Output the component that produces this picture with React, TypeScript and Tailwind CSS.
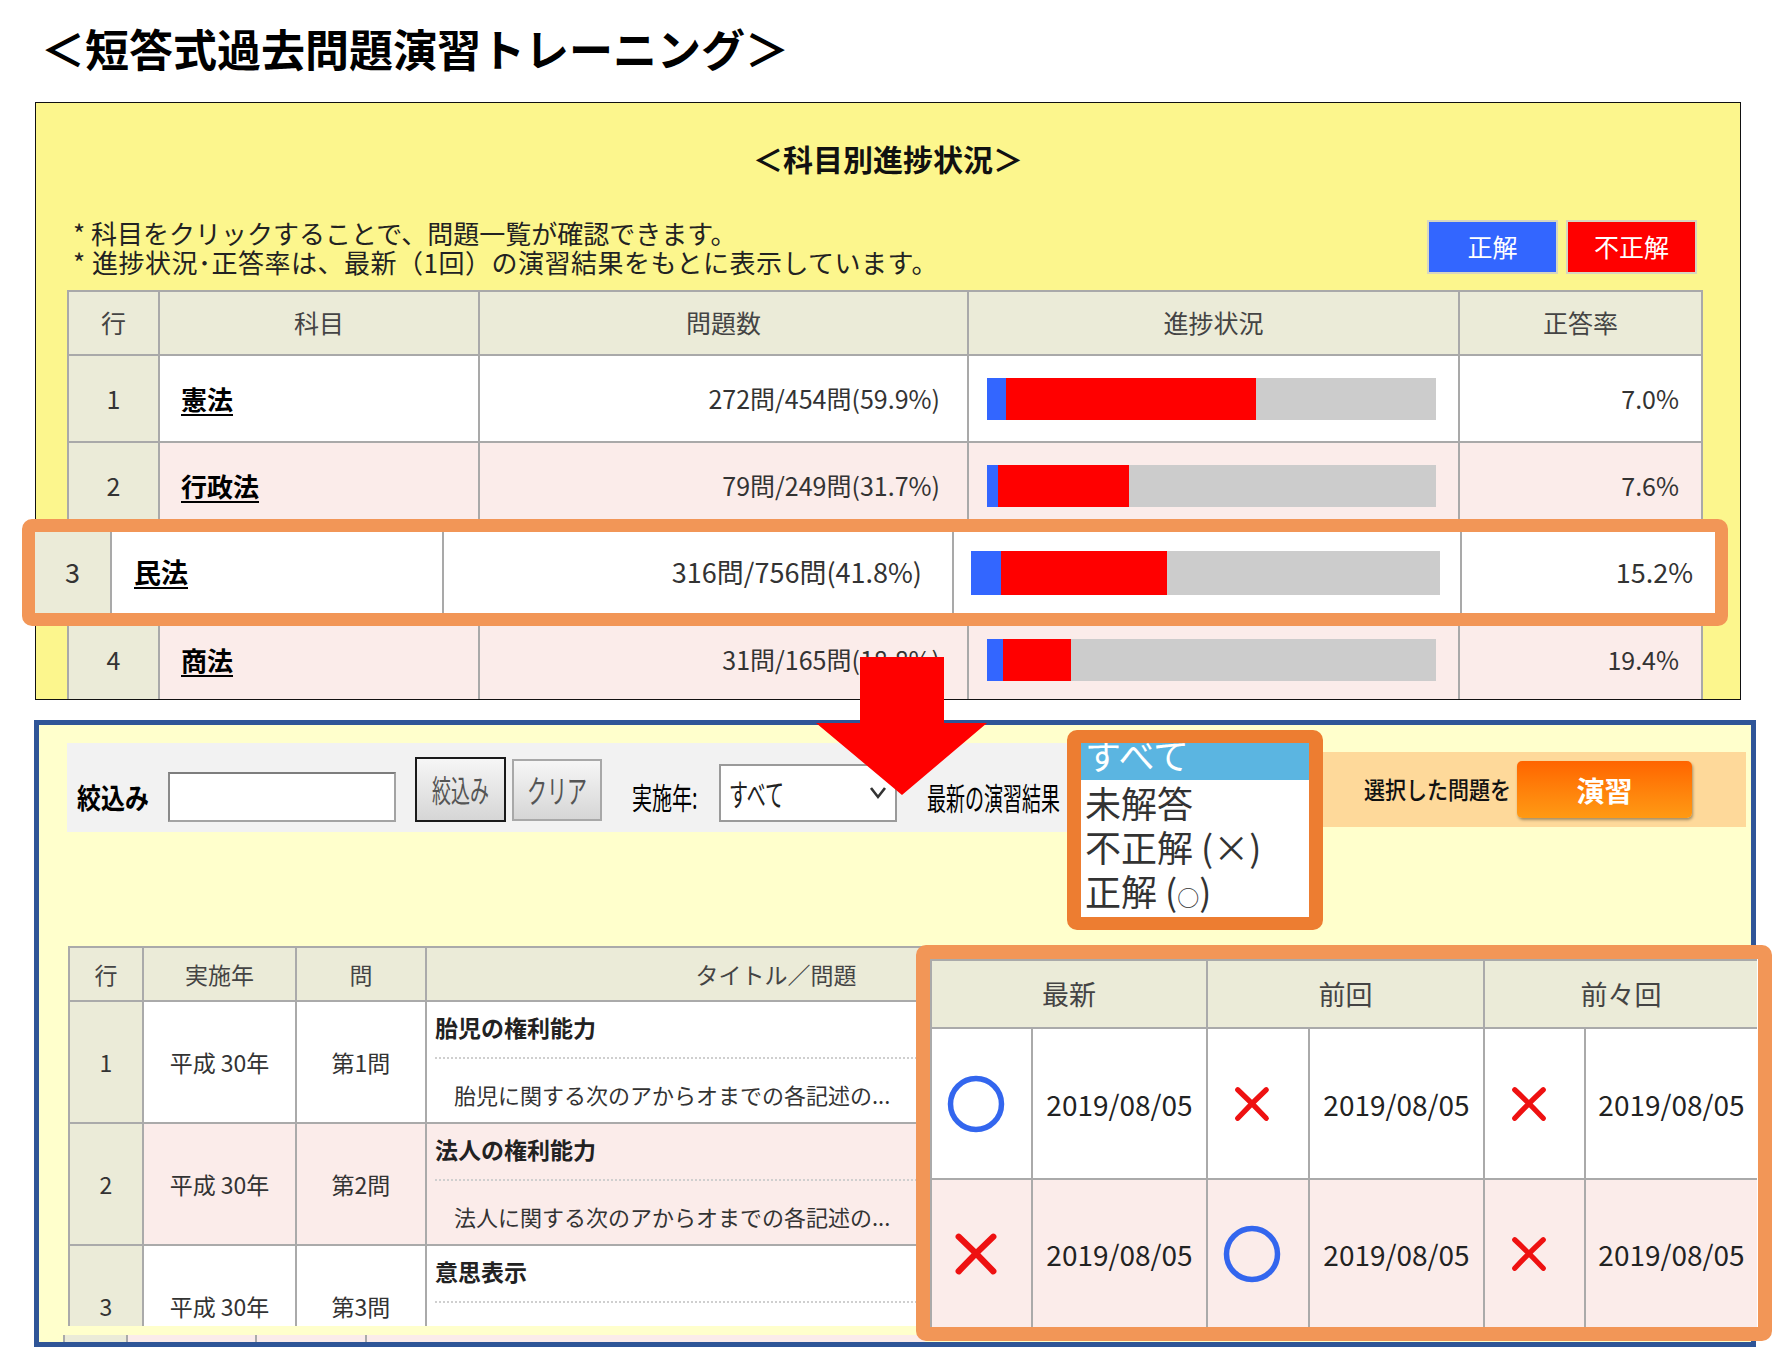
import React from "react";

const subjects = [
  { no: 1, name: "憲法", done: 272, total: 454, pct: "59.9", rate: 7.0 },
  { no: 2, name: "行政法", done: 79, total: 249, pct: "31.7", rate: 7.6 },
  { no: 3, name: "民法", done: 316, total: 756, pct: "41.8", rate: 15.2 },
  { no: 4, name: "商法", done: 31, total: 165, pct: "18.8", rate: 19.4 },
];

function Bar({ done, total, rate, h }: { done: number; total: number; rate: number; h: string }) {
  const all = (done / total) * 100;
  const blue = (all * rate) / 100;
  const red = all - blue;
  return (
    <div className={`w-full ${h} bg-[#cccccc] flex`}>
      <div className="h-full bg-[#3366ff]" style={{ width: `${blue}%` }} />
      <div className="h-full bg-[#ff0000]" style={{ width: `${red}%` }} />
    </div>
  );
}

function Box1() {
  const cell = "border-l-2 border-t-2 border-[#a9a9a9]";
  return (
    <div className="ml-[35px] w-[1706px] h-[598px] border border-[#111] bg-[#fcf68d] overflow-hidden">
      <div className="mt-[35px] h-[40px] leading-[40px] text-center text-[30px] font-bold text-[#111]">
        ＜科目別進捗状況＞
      </div>
      <div className="mt-[40px] flex items-center justify-between pl-[37px] pr-[43px]">
        <div className="text-[26px] leading-[29px] text-[#222]">
          <div>* 科目をクリックすることで、問題一覧が確認できます。</div>
          <div className="tracking-[0.5px]">* 進捗状況･正答率は、最新（1回）の演習結果をもとに表示しています。</div>
        </div>
        <div className="flex gap-[8px]">
          <div className="w-[131px] h-[54px] bg-[#3366ff] border-2 border-[#d6d6c0] flex items-center justify-center text-white text-[25px]">
            正解
          </div>
          <div className="w-[131px] h-[54px] bg-[#ff0000] border-2 border-[#d6d6c0] flex items-center justify-center text-white text-[25px]">
            不正解
          </div>
        </div>
      </div>
      <div className="mt-[14px] ml-[31px] w-[1636px]">
        <div className="grid grid-cols-[91px_320px_489px_491px_245px] h-[64px] bg-[#ebebd8] text-[25px] text-[#444]">
          <div className={`${cell} flex items-center justify-center`}>行</div>
          <div className={`${cell} flex items-center justify-center`}>科目</div>
          <div className={`${cell} flex items-center justify-center`}>問題数</div>
          <div className={`${cell} flex items-center justify-center`}>進捗状況</div>
          <div className={`${cell} border-r-2 flex items-center justify-center`}>正答率</div>
        </div>
        {subjects.map((s) => (
          <div
            key={s.no}
            className={`grid grid-cols-[91px_320px_489px_491px_245px] h-[87px] text-[25px] text-[#333] ${
              s.no % 2 === 0 ? "bg-[#fbecea]" : "bg-white"
            }`}
          >
            <div className={`${cell} bg-[#ebebd8] flex items-center justify-center`}>{s.no}</div>
            <div className={`${cell} flex items-center pl-[21px]`}>
              <span className="text-[26px] font-bold text-black underline underline-offset-[4px] decoration-[2px]">
                {s.name}
              </span>
            </div>
            <div className={`${cell} flex items-center justify-end pr-[27px]`}>
              {s.done}問/{s.total}問({s.pct}%)
            </div>
            <div className={`${cell} flex items-center pl-[18px] pr-[22px]`}>
              <Bar done={s.done} total={s.total} rate={s.rate} h="h-[42px]" />
            </div>
            <div className={`${cell} border-r-2 flex items-center justify-end pr-[22px]`}>{s.rate.toFixed(1)}%</div>
          </div>
        ))}
      </div>
    </div>
  );
}

const questions = [
  { no: 1, year: "平成 30年", q: "第1問", title: "胎児の権利能力", desc: "胎児に関する次のアからオまでの各記述の..." },
  { no: 2, year: "平成 30年", q: "第2問", title: "法人の権利能力", desc: "法人に関する次のアからオまでの各記述の..." },
  { no: 3, year: "平成 30年", q: "第3問", title: "意思表示", desc: "意思表示に関する次のアからオまでの各記述の..." },
];

function Box2() {
  const cell = "border-l-2 border-t-2 border-[#aaaaaa]";
  return (
    <div className="mt-[20px] ml-[34px] w-[1722px] h-[627px] border-[5px] border-[#2f5597] bg-[#ffffcc] overflow-hidden">
      <div className="mt-[18px] flex items-start">
        <div className="ml-[28px] w-[1083px] h-[89px] bg-[#f2f2f2] flex items-end pb-[10px] text-black">
          <div className="ml-[10px] w-[91px] h-[50px] flex items-center">
            <span className="inline-block text-[24px] font-bold scale-y-[1.2]">絞込み</span>
          </div>
          <div className="w-[228px] h-[50px] bg-white border-2 border-[#a3a3a3] border-t-[#7d7d7d] border-l-[#8a8a8a]" />
          <div className="ml-[19px] w-[91px] h-[65px] border-2 border-[#1a1a1a] bg-linear-to-b from-[#f6f6f6] to-[#d6d6d6] flex items-center justify-center text-[#555]">
            <span className="inline-block text-[19px] scale-y-[1.6]">絞込み</span>
          </div>
          <div className="ml-[6px] mb-[1px] w-[90px] h-[62px] border-2 border-[#a8a8a8] bg-linear-to-b from-[#f6f6f6] to-[#d6d6d6] flex items-center justify-center text-[#555]">
            <span className="inline-block text-[20px] scale-y-[1.6]">クリア</span>
          </div>
          <div className="ml-[30px] w-[87px] h-[50px] flex items-center">
            <span className="inline-block text-[20px] scale-y-[1.5]">実施年:</span>
          </div>
          <div className="w-[178px] h-[58px] bg-white border-2 border-[#9a9a9a] flex items-center justify-between pl-[8px] pr-[8px] text-[#222]">
            <span className="inline-block text-[19px] scale-y-[1.6]">すべて</span>
            <svg width="18" height="14" viewBox="0 0 18 14">
              <polyline points="2,2 9,11 16,2" fill="none" stroke="#333" strokeWidth="2.6" />
            </svg>
          </div>
          <div className="ml-[30px] h-[50px] flex items-center">
            <span className="inline-block text-[19px] scale-y-[1.6] whitespace-nowrap">最新の演習結果</span>
          </div>
        </div>
        <div className="mt-[9px] w-[596px] h-[75px] bg-[#fed99a] flex items-center pl-[214px]">
          <span className="inline-block text-[21px] font-medium text-[#111] whitespace-nowrap scale-y-[1.15]">選択した問題を</span>
          <div className="ml-[6px] w-[175px] h-[57px] rounded-[5px] bg-linear-to-b from-[#ff6400] to-[#ff9a14] shadow-[1px_2px_3px_rgba(0,0,0,0.35)] flex items-center justify-center text-white text-[28px] font-bold">
            演習
          </div>
        </div>
      </div>

      <div className="mt-[114px] ml-[29px] h-[380px] w-[1100px] overflow-hidden">
        <div className="grid grid-cols-[74px_153px_130px_700px] h-[54px] bg-[#ebebd8] text-[23px] text-[#444]">
          <div className={`${cell} flex items-center justify-center`}>行</div>
          <div className={`${cell} flex items-center justify-center`}>実施年</div>
          <div className={`${cell} flex items-center justify-center`}>問</div>
          <div className={`${cell} flex items-center justify-center`}>タイトル／問題</div>
        </div>
        {questions.map((r) => (
          <div
            key={r.no}
            className={`grid grid-cols-[74px_153px_130px_700px] h-[122px] text-[23px] text-[#333] ${
              r.no % 2 === 0 ? "bg-[#fbecea]" : "bg-white"
            }`}
          >
            <div className={`${cell} bg-[#ebebd8] flex items-center justify-center`}>{r.no}</div>
            <div className={`${cell} flex items-center justify-center`}>{r.year}</div>
            <div className={`${cell} flex items-center justify-center`}>{r.q}</div>
            <div className={`${cell} flex flex-col`}>
              <div className="mt-[11px] pl-[8px] h-[28px] leading-[28px] text-[23px] font-bold text-[#222]">{r.title}</div>
              <div className="mt-[16px] ml-[8px] border-t-2 border-dotted border-[#cfcfcf]" />
              <div className="mt-[21px] pl-[27px] h-[28px] leading-[28px] text-[22px] text-[#333] whitespace-nowrap">{r.desc}</div>
            </div>
          </div>
        ))}
      </div>
      <div className="h-[9px]" />
      <div className="flex h-[7px]">
        <div className="ml-[24px] w-[63px] bg-[#ebebd8] border-l-2 border-[#aaaaaa]" />
        <div className="w-[129px] bg-[#fbecea] border-l-2 border-[#aaaaaa]" />
        <div className="w-[110px] bg-[#fbecea] border-l-2 border-[#aaaaaa]" />
        <div className="w-[560px] bg-[#fbecea] border-l-2 border-[#aaaaaa]" />
      </div>
    </div>
  );
}

function HighlightRow() {
  const s = subjects[2];
  const cell = "border-l-2 border-[#a9a9a9]";
  return (
    <div className="absolute left-[22px] top-[519px] w-[1706px] h-[107px] border-[13px] border-[#f29657] rounded-[10px] overflow-hidden bg-white">
      <div className="grid grid-cols-[75px_332px_510px_508px_255px] h-full text-[27px] text-[#333]">
        <div className="bg-[#ebebd8] flex items-center justify-center">3</div>
        <div className={`${cell} flex items-center pl-[22px]`}>
          <span className="text-[27px] font-bold text-black underline underline-offset-[4px] decoration-[2px]">民法</span>
        </div>
        <div className={`${cell} flex items-center justify-end pr-[30px]`}>
          {s.done}問/{s.total}問({s.pct}%)
        </div>
        <div className={`${cell} flex items-center pl-[17px] pr-[20px]`}>
          <Bar done={s.done} total={s.total} rate={s.rate} h="h-[44px]" />
        </div>
        <div className={`${cell} flex items-center justify-end pr-[22px]`}>15.2%</div>
      </div>
    </div>
  );
}

function Arrow() {
  return (
    <svg className="absolute left-[816px] top-[657px]" width="171" height="138" viewBox="0 0 171 138">
      <polygon points="44,0 128,0 128,66 171,66 86,138 0,66 44,66" fill="#ff0000" />
    </svg>
  );
}

function Dropdown() {
  return (
    <div className="absolute left-[1067px] top-[730px] w-[256px] h-[200px] border-x-[14px] border-y-[13px] border-[#ed7d31] rounded-[10px] bg-white overflow-hidden">
      <div className="-mt-[10px] text-[36px] leading-[44px] text-[#333] whitespace-nowrap">
        <div className="bg-[#5bb5e1] text-white pl-[4px] h-[47px] leading-[42px]">すべて</div>
        <div className="pl-[4px]">未解答</div>
        <div className="pl-[4px]">不正解 (×)</div>
        <div className="pl-[4px]">
          正解 (<span className="text-[22px] align-middle">○</span>)
        </div>
      </div>
    </div>
  );
}

function CircleMark({ size }: { size: number }) {
  return (
    <svg width={size} height={size} viewBox="0 0 58 58">
      <circle cx="29" cy="29" r="25.5" fill="none" stroke="#3366ee" strokeWidth="5.5" />
    </svg>
  );
}

function CrossMark({ size }: { size: number }) {
  return (
    <svg width={size} height={size} viewBox="0 0 40 40">
      <path d="M5 5 Q20 19 35 35 M35 5 Q19 20 5 35" fill="none" stroke="#ee1111" strokeWidth="5.5" strokeLinecap="round" />
    </svg>
  );
}

function ResultOverlay() {
  const cell = "border-l-2 border-t-2 border-[#aaaaaa]";
  const rows: { marks: ("o" | "x")[]; big: boolean[] }[] = [
    { marks: ["o", "x", "x"], big: [false, false, false] },
    { marks: ["x", "o", "x"], big: [true, false, false] },
  ];
  return (
    <div className="absolute left-[916px] top-[945px] w-[856px] h-[396px] border-[14px] border-[#f29657] rounded-[10px] overflow-hidden bg-white">
      <div className="grid grid-cols-[101px_175px_102px_175px_101px_173px] grid-rows-[68px_151px_149px] h-full text-[#222]">
        {["最新", "前回", "前々回"].map((h) => (
          <div key={h} className={`${cell} col-span-2 bg-[#ebebd8] flex items-center justify-center text-[27px] text-[#444]`}>
            {h}
          </div>
        ))}
        {rows.map((r, ri) =>
          r.marks.map((m, mi) => (
            <React.Fragment key={`${ri}-${mi}`}>
              <div
                className={`${cell} ${ri === 1 ? "bg-[#fbecea]" : "bg-white"} flex items-center justify-center pr-[12px]`}
              >
                {m === "o" ? <CircleMark size={58} /> : <CrossMark size={r.big[mi] ? 46 : 38} />}
              </div>
              <div className={`${cell} ${ri === 1 ? "bg-[#fbecea]" : "bg-white"} flex items-center justify-center text-[28px]`}>
                2019/08/05
              </div>
            </React.Fragment>
          ))
        )}
      </div>
    </div>
  );
}

export default function App() {
  return (
    <div className="relative w-[1772px] h-[1347px] overflow-hidden bg-white font-['Noto_Sans_CJK_JP','Noto_Sans',sans-serif] text-[#333]">
      <div className="h-[102px] pl-[41px] pt-[21px]">
        <h1 className="text-[44px] leading-[54px] font-bold text-black whitespace-nowrap">
          ＜短答式過去問題演習トレーニング＞
        </h1>
      </div>
      <Box1 />
      <Box2 />
      <HighlightRow />
      <Arrow />
      <Dropdown />
      <ResultOverlay />
    </div>
  );
}
